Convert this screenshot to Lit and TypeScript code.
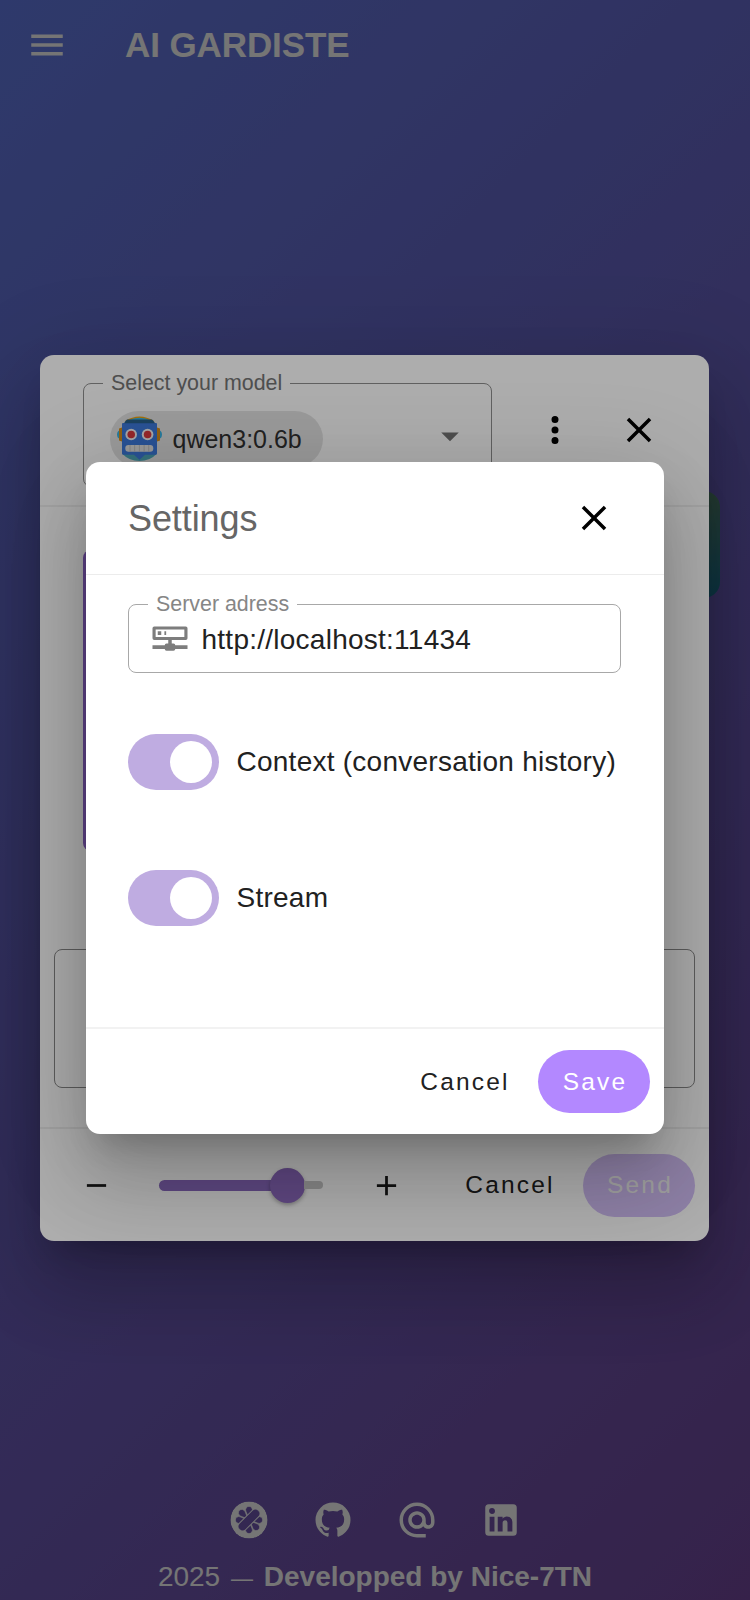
import { LitElement, html, css, svg } from "lit";
import { customElement, property } from "lit/decorators.js";

const ICONS: Record<string, string> = {
  menu: "M3,6H21V8H3V6M3,11H21V13H3V11M3,16H21V18H3V16Z",
  close:
    "M19,6.41L17.59,5L12,10.59L6.41,5L5,6.41L10.59,12L5,17.59L6.41,19L12,13.41L17.59,19L19,17.59L13.41,12L19,6.41Z",
  dots: "M12,16A2,2 0 0,1 14,18A2,2 0 0,1 12,20A2,2 0 0,1 10,18A2,2 0 0,1 12,16M12,10A2,2 0 0,1 14,12A2,2 0 0,1 12,14A2,2 0 0,1 10,12A2,2 0 0,1 12,10M12,4A2,2 0 0,1 14,6A2,2 0 0,1 12,8A2,2 0 0,1 10,6A2,2 0 0,1 12,4Z",
  caret: "M7,10L12,15L17,10H7Z",
  minus: "M19,13H5V11H19V13Z",
  plus: "M19,13H13V19H11V13H5V11H11V5H13V11H19V13Z",
  server:
    "M3,2.5H21A1,1 0 0,1 22,3.5V9.3A1,1 0 0,1 21,10.3H13V12.3H14A1,1 0 0,1 15,13.3H22V15.4H15A1,1 0 0,1 14,16.4H10A1,1 0 0,1 9,15.4H2V13.3H9A1,1 0 0,1 10,12.3H11V10.3H3A1,1 0 0,1 2,9.3V3.5A1,1 0 0,1 3,2.5M3.8,4.3V8.5H20.2V4.3H3.8M5,5.3H7V7.4H5V5.3M8.8,5.3H9.8V7.4H8.8V5.3Z",
  github:
    "M12,2A10,10 0 0,0 2,12C2,16.42 4.87,20.17 8.84,21.5C9.34,21.58 9.5,21.27 9.5,21C9.5,20.77 9.5,20.14 9.5,19.31C6.73,19.91 6.14,17.97 6.14,17.97C5.68,16.81 5.03,16.5 5.03,16.5C4.12,15.88 5.1,15.9 5.1,15.9C6.1,15.97 6.63,16.93 6.63,16.93C7.5,18.45 8.97,18 9.54,17.76C9.63,17.11 9.89,16.67 10.17,16.42C7.95,16.17 5.62,15.31 5.62,11.5C5.62,10.39 6,9.5 6.65,8.79C6.55,8.54 6.2,7.5 6.75,6.15C6.75,6.15 7.59,5.88 9.5,7.17C10.29,6.95 11.15,6.84 12,6.84C12.85,6.84 13.71,6.95 14.5,7.17C16.41,5.88 17.25,6.15 17.25,6.15C17.8,7.5 17.45,8.54 17.35,8.79C18,9.5 18.38,10.39 18.38,11.5C18.38,15.32 16.04,16.16 13.81,16.41C14.17,16.72 14.5,17.33 14.5,18.26C14.5,19.6 14.5,20.68 14.5,21C14.5,21.27 14.66,21.59 15.17,21.5C19.14,20.16 22,16.42 22,12A10,10 0 0,0 12,2Z",
  at: "M12,15C12.81,15 13.5,14.7 14.11,14.11C14.7,13.5 15,12.81 15,12C15,11.19 14.7,10.5 14.11,9.89C13.5,9.3 12.81,9 12,9C11.19,9 10.5,9.3 9.89,9.89C9.3,10.5 9,11.19 9,12C9,12.81 9.3,13.5 9.89,14.11C10.5,14.7 11.19,15 12,15M12,2C14.75,2 17.1,3 19.05,4.95C21,6.9 22,9.25 22,12V13.45C22,14.45 21.65,15.3 21,16C20.3,16.67 19.5,17 18.5,17C17.3,17 16.31,16.5 15.56,15.5C14.56,16.5 13.38,17 12,17C10.63,17 9.45,16.5 8.46,15.54C7.5,14.55 7,13.38 7,12C7,10.63 7.5,9.45 8.46,8.46C9.45,7.5 10.63,7 12,7C13.37,7 14.55,7.5 15.54,8.46C16.5,9.45 17,10.63 17,12V13.45C17,13.86 17.16,14.22 17.46,14.53C17.76,14.84 18.11,15 18.5,15C18.92,15 19.27,14.84 19.57,14.53C19.87,14.22 20,13.86 20,13.45V12C20,9.81 19.23,7.93 17.65,6.35C16.07,4.77 14.19,4 12,4C9.81,4 7.93,4.77 6.35,6.35C4.77,7.93 4,9.81 4,12C4,14.19 4.77,16.07 6.35,17.65C7.93,19.23 9.81,20 12,20H17V22H12C9.25,22 6.9,21 4.95,19.05C3,17.1 2,14.75 2,12C2,9.25 3,6.9 4.95,4.95C6.9,3 9.25,2 12,2Z",
  linkedin:
    "M19 3A2 2 0 0 1 21 5V19A2 2 0 0 1 19 21H5A2 2 0 0 1 3 19V5A2 2 0 0 1 5 3H19M18.5 18.5V13.2A3.26 3.26 0 0 0 15.24 9.94C14.39 9.94 13.4 10.46 12.92 11.24V10.13H10.13V18.5H12.92V13.57C12.92 12.8 13.54 12.17 14.31 12.17A1.4 1.4 0 0 1 15.71 13.57V18.5H18.5M6.88 8.56A1.68 1.68 0 0 0 8.56 6.88C8.56 5.95 7.81 5.19 6.88 5.19A1.69 1.69 0 0 0 5.19 6.88C5.19 7.81 5.95 8.56 6.88 8.56M8.27 18.5V10.13H5.5V18.5H8.27Z",
};

@customElement("ui-icon")
export class UiIcon extends LitElement {
  @property() name = "";
  static styles = css`
    :host { display: block; width: 42px; height: 42px; flex: none; }
    .glyph { display: block; width: 100%; height: 100%; fill: currentColor; }
  `;
  render() {
    return html`<svg class="glyph" viewBox="0 0 24 24" fill-rule="evenodd"><path d=${ICONS[this.name]}></path></svg>`;
  }
}

@customElement("robot-avatar")
export class RobotAvatar extends LitElement {
  static styles = css`
    :host { display: block; width: 46px; height: 46px; flex: none; }
    .face { display: block; }
  `;
  render() {
    return html`<svg class="face" width="46" height="46" viewBox="0 0 46 46">
      <path d="M8 5Q22.5 -4 37 5Z" fill="#f2a30c"></path>
      <path d="M10 5Q22.5 -1.5 35 5Z" fill="#39b4e6"></path>
      <path d="M3 14Q0 15 0 18.5Q0 22 3 23Z" fill="#39b4e6"></path>
      <path d="M42 14Q45 15 45 18.5Q45 22 42 23Z" fill="#39b4e6"></path>
      <path d="M5 11.5L2 12.5V24.5L5 25.5Z" fill="#d8901c"></path>
      <path d="M40 11.5L43 12.5V24.5L40 25.5Z" fill="#d8901c"></path>
      <path d="M5.5 38H39.5Q33 45 22.5 45Q12 45 5.5 38Z" fill="#4fa9b8"></path>
      <path d="M6 7H39A1 1 0 0 1 40 8V37.5A1.2 1.2 0 0 1 39 38.7H28L22.5 43.7L17 38.7H6A1.2 1.2 0 0 1 5 37.5V8A1 1 0 0 1 6 7Z" fill="#3d79dc"></path>
      <path d="M10 3.5H35Q37 5 38 7.3H7Q8 5 10 3.5Z" fill="#28628c"></path>
      <circle cx="14.2" cy="18.5" r="5.8" fill="#f4f4f4"></circle>
      <circle cx="30.6" cy="18.5" r="5.8" fill="#f4f4f4"></circle>
      <circle cx="14.2" cy="18.5" r="3.8" fill="#dc3a3e"></circle>
      <circle cx="30.6" cy="18.5" r="3.8" fill="#dc3a3e"></circle>
      <rect x="8.3" y="29" width="28" height="6.8" rx="3.2" fill="#e4e4e4"></rect>
      ${[13, 17.7, 22.4, 27.1, 31.8].map((x) => svg`<path d=${`M${x} 29V35.8`} stroke="#bdbdbd" stroke-width="0.9"></path>`)}
    </svg>`;
  }
}

@customElement("flower-badge")
export class FlowerBadge extends LitElement {
  static styles = css`
    :host { display: block; width: 42px; height: 42px; flex: none; }
    .badge { display: block; }
  `;
  render() {
    const petals = [0, 48, 90, 180, 228, 270];
    return html`<svg class="badge" width="42" height="42" viewBox="-21 -21 42 42">
      <mask id="cut">
        <circle r="18.6" fill="#fff"></circle>
        ${[...petals, -45, 135].map(
          (a) => svg`<g transform=${`rotate(${a})`}><path d="M0 -1L-3.2 -9A3.4 3.4 0 1 1 3.2 -9Z" fill="#000" stroke="#fff" stroke-width="0.6"></path></g>`,
        )}
        <g transform="rotate(-45)">
          <rect x="-13.6" y="-5" width="27.2" height="10" rx="5" fill="#fff"></rect>
          <rect x="-13" y="-4" width="26" height="8" rx="4" fill="#000"></rect>
        </g>
      </mask>
      <circle r="18.6" fill="#fff" mask="url(#cut)"></circle>
    </svg>`;
  }
}

@customElement("outlined-field")
export class OutlinedField extends LitElement {
  @property() label = "";
  static styles = css`
    :host { display: block; }
    .frame {
      box-sizing: border-box; width: 100%; height: 100%; margin: 0; min-width: 0;
      border: 1.5px solid var(--line, #a8a8a8); border-radius: 8px; padding: 0 20px;
      display: block;
    }
    .legend {
      padding: 0 8px; font-size: 21.4px; line-height: 24px; height: 24px; margin-left: -0.5px;
      color: var(--label, #868686);
    }
  `;
  render() {
    return html`<fieldset class="frame">
      ${this.label ? html`<legend class="legend">${this.label}</legend>` : null}
      <slot></slot>
    </fieldset>`;
  }
}

@customElement("toggle-row")
export class ToggleRow extends LitElement {
  @property() label = "";
  static styles = css`
    :host { display: flex; align-items: center; gap: 18px; height: 56px; }
    .track {
      box-sizing: border-box; width: 91px; height: 56px; border-radius: 28px; padding: 7px;
      background: #bface1; display: flex; justify-content: flex-end; align-items: center;
    }
    .thumb { width: 42px; height: 42px; border-radius: 50%; background: #fff; }
    .label { font-size: 28px; letter-spacing: 0.009em; line-height: 42px; color: #212121; white-space: nowrap; }
  `;
  render() {
    return html`<div class="track"><div class="thumb"></div></div><span class="label">${this.label}</span>`;
  }
}

@customElement("app-root")
export class AppRoot extends LitElement {
  static styles = css`
    :host {
      display: block; position: relative; width: 750px; height: 1600px; overflow: hidden;
      font-family: "Liberation Sans", Arial, sans-serif;
    }
    .page {
      height: 100%; display: flex; flex-direction: column; color: #fff;
      background: linear-gradient(135deg, #667eea 0%, #764ba2 100%);
    }
    .bar { display: flex; align-items: center; height: 90px; padding-left: 26px; gap: 57px; }
    .brand { font-size: 35px; font-weight: 700; letter-spacing: -0.1px; }
    .feed { flex: 1; display: flex; flex-direction: column; align-items: flex-end; padding: 401px 30px 0 0; }
    .bubble { width: 300px; height: 107px; border-radius: 16px; background: linear-gradient(180deg, #5a8a74, #1f7a9a); }
    .foot { display: flex; flex-direction: column; align-items: center; height: 101px; gap: 18px; }
    .social { display: flex; gap: 42px; }
    .credit { font-size: 28px; line-height: 36px; white-space: nowrap; }
    .dash { font-size: 22px; margin: 0 3px; }

    .overlay {
      position: absolute; inset: 0; display: flex; justify-content: center; align-items: flex-start;
      background: rgba(0, 0, 0, 0.32);
    }
    .card {
      box-sizing: border-box; background: #fff; border-radius: 14px; display: flex; flex-direction: column;
      box-shadow: 0 22px 30px -14px rgba(0, 0, 0, 0.2), 0 48px 76px 6px rgba(0, 0, 0, 0.14),
        0 18px 92px 16px rgba(0, 0, 0, 0.12);
    }
    .chat { width: 669px; height: 886px; margin: 355px 1px 0 0; }
    .settings { width: 578px; height: 672px; margin: 462px 0 0 0; }

    .chat-head { display: flex; height: 152px; box-sizing: border-box; border-bottom: 2px solid #f0f0f0; padding: 16px 0 0 42.5px; }
    .model { width: 409px; height: 116px; --line: #8f8f8f; --label: #757575; }
    .model-row { display: flex; align-items: center; justify-content: space-between; padding: 16px 0 0 6.5px; }
    .chip {
      display: flex; align-items: center; gap: 10px; height: 56px; border-radius: 28px; background: #e4e4e4;
      padding: 0 21px 0 6.5px; font-size: 25px; color: #333; box-sizing: border-box; width: 213px;
    }
    .caret { color: #757575; margin-bottom: 7px; }
    .tools { display: flex; gap: 42px; padding: 38px 0 0 42.5px; color: #000; }
    .chat-body { height: 622px; box-sizing: border-box; padding: 43px 14px 0 14px; border-bottom: 2px solid #efefef; }
    .answer { width: 520px; height: 301px; border-radius: 8px; background: #8b62c9; margin-left: 28.5px; }
    .prompt { height: 139px; margin-top: 98px; --line: #8a8a8a; }
    .chat-foot { display: flex; align-items: center; flex: 1; padding: 0 14px 0 40px; color: #1a1a1a; }
    .step { width: 33px; height: 33px; }
    .slider { display: flex; align-items: center; width: 164px; margin: 0 47px 0 46px; }
    .fill { width: 128px; height: 11px; border-radius: 6px 0 0 6px; background: #8969be; }
    .knob {
      width: 35px; height: 35px; border-radius: 50%; background: #8c69be; margin: 0 -1px 0 -17px; flex: none;
      box-shadow: 0 2px 4px rgba(0, 0, 0, 0.3);
    }
    .rest { flex: 1; height: 8px; border-radius: 0 4px 4px 0; background: #c6c6c6; }
    .spacer { flex: 1; }
    .btn {
      display: flex; align-items: center; justify-content: center; height: 63px; font-size: 24.5px;
      letter-spacing: 0.0892em; color: #212121; box-sizing: border-box; padding-left: 2px;
    }
    .text { width: 118px; margin-right: 14px; padding-left: 0; }
    .solid { width: 112px; border-radius: 32px; background: #b388ff; color: #fff; }
    .off { background: #d1bdf5; color: #eeeeee; }

    .set-head {
      display: flex; align-items: center; justify-content: space-between; box-sizing: border-box; height: 113px;
      padding: 0 49px 0 42px; border-bottom: 1.5px solid #ececec;
    }
    .title { font-size: 36px; color: #666; letter-spacing: -0.1px; padding-top: 1px; }
    .black { color: #000; }
    .set-body { flex: 1; padding: 17px 42px 0 41.5px; }
    .address { width: 493.5px; height: 81px; margin-bottom: 60.5px; }
    .address-row { display: flex; align-items: center; gap: 11px; color: #212121; font-size: 28px; letter-spacing: 0.009em; line-height: 42px; margin-top: -1px; }
    .address-icon { color: #7d7d7d; margin-top: 7px; }
    .second { margin-top: 80.5px; }
    .set-foot {
      display: flex; align-items: center; justify-content: flex-end; box-sizing: border-box; height: 107px;
      padding: 0 14px; border-top: 2px solid #f2f2f2;
    }
  `;

  render() {
    return html`
      <div class="page">
        <header class="bar"><ui-icon name="menu"></ui-icon><span class="brand">AI GARDISTE</span></header>
        <main class="feed"><div class="bubble"></div></main>
        <footer class="foot">
          <div class="social">
            <flower-badge></flower-badge><ui-icon name="github"></ui-icon><ui-icon name="at"></ui-icon><ui-icon name="linkedin"></ui-icon>
          </div>
          <div class="credit">2025 <span class="dash">—</span> <b>Developped by Nice-7TN</b></div>
        </footer>
      </div>
      <div class="overlay">
        <section class="card chat">
          <div class="chat-head">
            <outlined-field class="model" label="Select your model">
              <div class="model-row">
                <div class="chip"><robot-avatar></robot-avatar><span>qwen3:0.6b</span></div>
                <ui-icon class="caret" name="caret"></ui-icon>
              </div>
            </outlined-field>
            <div class="tools"><ui-icon name="dots"></ui-icon><ui-icon name="close"></ui-icon></div>
          </div>
          <div class="chat-body">
            <div class="answer"></div>
            <outlined-field class="prompt"></outlined-field>
          </div>
          <div class="chat-foot">
            <ui-icon class="step" name="minus"></ui-icon>
            <div class="slider"><div class="fill"></div><div class="knob"></div><div class="rest"></div></div>
            <ui-icon class="step" name="plus"></ui-icon>
            <div class="spacer"></div>
            <div class="btn text">Cancel</div>
            <div class="btn solid off">Send</div>
          </div>
        </section>
      </div>
      <div class="overlay">
        <section class="card settings">
          <div class="set-head"><span class="title">Settings</span><ui-icon class="black" name="close"></ui-icon></div>
          <div class="set-body">
            <outlined-field class="address" label="Server adress">
              <div class="address-row"><ui-icon class="address-icon" name="server"></ui-icon><span>http://localhost:11434</span></div>
            </outlined-field>
            <toggle-row label="Context (conversation history)"></toggle-row>
            <toggle-row class="second" label="Stream"></toggle-row>
          </div>
          <div class="set-foot">
            <div class="btn text">Cancel</div>
            <div class="btn solid">Save</div>
          </div>
        </section>
      </div>
    `;
  }
}
